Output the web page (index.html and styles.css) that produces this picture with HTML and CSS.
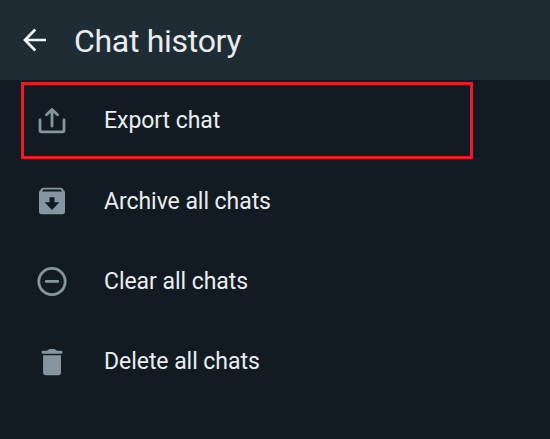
FILE: index.html
```
<!DOCTYPE html>
<html lang="en">
<head>
    <meta charset="UTF-8">
    <title>Chat history</title>
    <link rel="stylesheet" href="styles.css">
</head>
<body>
    <header class="top-bar">
        <svg class="back-icon" viewBox="0 0 26 26">
            <path d="M12.3 2.5L2 13L12.3 23.5M2.5 13H23"/>
        </svg>
        <h1>Chat history</h1>
    </header>

    <ul class="menu">
        <li class="menu-item highlighted">
            <svg class="icon" viewBox="0 0 32 32">
                <path class="line" d="M4 15V25.3Q4 26.8 5.5 26.8H26.5Q28 26.8 28 25.3V15M16 21V5M10.5 9.8L16 4.5L21.5 9.8"/>
            </svg>
            <span>Export chat</span>
        </li>
        <li class="menu-item">
            <svg class="icon" viewBox="0 0 32 32">
                <path class="fill" fill-rule="evenodd" d="M7.5 2.8H24.5Q25.8 2.8 26.6 3.8L28.3 5.8Q29 6.6 29 7.8V26.5Q29 29.2 26.3 29.2H5.7Q3 29.2 3 26.5V7.8Q3 6.6 3.7 5.8L5.4 3.8Q6.2 2.8 7.5 2.8ZM7.5 4.5L5.9 6.5H26.1L24.5 4.5ZM13.5 12.3V17.3H8.5L16 25L23.5 17.3H18.5V12.3Z"/>
            </svg>
            <span>Archive all chats</span>
        </li>
        <li class="menu-item">
            <svg class="icon" viewBox="0 0 32 32">
                <circle class="line" cx="16" cy="16.5" r="13.2"/>
                <path class="line" d="M10.2 16.4H21.8"/>
            </svg>
            <span>Clear all chats</span>
        </li>
        <li class="menu-item">
            <svg class="icon" viewBox="0 0 32 32">
                <path class="fill" d="M11.2 5.8Q12.5 4 14 4H18Q19.5 4 20.8 5.8H25.2Q26.6 5.8 26.6 7.3T25.2 8.8H6.9Q5.5 8.8 5.5 7.3T6.9 5.8ZM7.1 10.3H25V27.5Q25 30.2 22.3 30.2H9.8Q7.1 30.2 7.1 27.5Z"/>
            </svg>
            <span>Delete all chats</span>
        </li>
    </ul>
</body>
</html>
```
FILE: styles.css
```
* { box-sizing: border-box; }
body {
    margin: 0;
    min-height: 439px;
    background: #121b22;
    color: #e9edef;
    font-family: Roboto, sans-serif;
}
.top-bar {
    display: flex;
    align-items: center;
    height: 80px;
    padding: 2px 0 0 23px;
    background: #1f2c34;
}
.top-bar h1 {
    margin: 0 0 1px 25px;
    font-size: 32px;
    font-weight: 400;
    line-height: 40px;
    letter-spacing: -0.3px;
}
.back-icon {
    width: 26px;
    height: 26px;
    margin-bottom: 3px;
    fill: none;
    stroke: #f2f5f6;
    stroke-width: 2.7;
}
.menu {
    margin: 0;
    padding: 1px 0 0;
    list-style: none;
}
.menu-item {
    display: flex;
    align-items: center;
    height: 80px;
    padding-left: 36px;
    font-size: 23px;
    letter-spacing: -0.05px;
}
.menu-item span {
    margin: 2px 0 0 36px;
    line-height: 30px;
}
.highlighted {
    width: 452px;
    height: 77px;
    margin: 1px 0 2px 21px;
    padding-left: 12px;
    border: 3px solid #ed1c24;
}
.highlighted span { margin-top: 0; }
.icon {
    width: 32px;
    height: 32px;
}
.line {
    fill: none;
    stroke: #8696a0;
    stroke-width: 2.8;
    stroke-linecap: round;
    stroke-linejoin: round;
}
.fill { fill: #8696a0; }
```
